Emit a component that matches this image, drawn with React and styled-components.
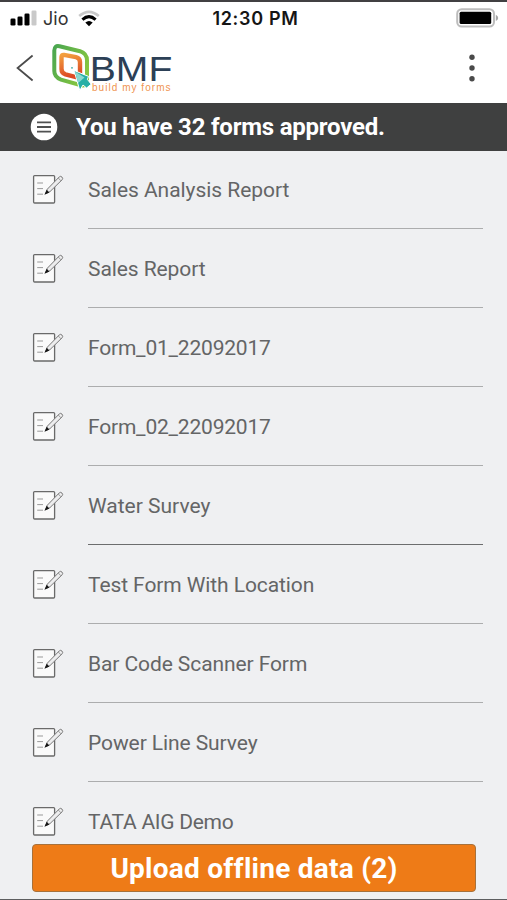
import React from 'react';
import styled, { createGlobalStyle } from 'styled-components';

const COLORS = {
  ink: '#3f4040',
  page: '#eff0f2',
  text: '#646566',
  line: '#acadae',
  orange: '#ee7b17',
  navy: '#2c4056',
};

const FORMS = [
  { name: 'Sales Analysis Report', spacing: '-0.04px' },
  { name: 'Sales Report' },
  { name: 'Form_01_22092017', spacing: '-0.2px' },
  { name: 'Form_02_22092017', spacing: '-0.2px' },
  { name: 'Water Survey', active: true, spacing: '0' },
  { name: 'Test Form With Location' },
  { name: 'Bar Code Scanner Form' },
  { name: 'Power Line Survey' },
  { name: 'TATA AIG Demo', spacing: '-0.27px' },
];

function SignalIcon() {
  return (
    <svg width="28" height="18" viewBox="0 0 28 18">
      <rect x="0.5" y="9.5" width="5" height="7" rx="1.3" />
      <rect x="7.5" y="7.5" width="5" height="9" rx="1.3" />
      <rect x="14.5" y="4.5" width="5" height="12" rx="1.3" />
      <rect x="21.5" y="1.5" width="5" height="15" rx="1.3" fill="#c9c9c9" />
    </svg>
  );
}

function WifiIcon() {
  return (
    <svg width="22" height="17" viewBox="0 0 22 17" fill="none">
      <path d="M1.2 6Q11 -2.4 20.8 6" stroke="#c9c9c9" strokeWidth="2.6" />
      <path d="M4.4 9.6Q11 3.6 17.6 9.6" stroke="#000" strokeWidth="3" />
      <path d="M7.3 12.6Q11 9.2 14.7 12.6L11 16.2Z" fill="#000" />
    </svg>
  );
}

function BatteryIcon() {
  return (
    <svg width="43" height="20" viewBox="0 0 43 20">
      <rect x="1.2" y="1.2" width="36.8" height="17.4" rx="4.5" fill="#fff" stroke="#bdbdbd" strokeWidth="2" />
      <rect x="3.6" y="3.8" width="31.6" height="12.2" rx="1.5" />
      <path d="M39.8 6.7Q42.2 8 42.2 10T39.8 13Z" fill="#a5a5a5" />
    </svg>
  );
}

function Logo() {
  return (
    <svg width="124" height="56" viewBox="50 40 124 56">
      <defs>
        <linearGradient id="leaf" x1="0" y1="0" x2="1" y2="0.6">
          <stop offset="0" stopColor="#4aa650" />
          <stop offset="1" stopColor="#86c640" />
        </linearGradient>
        <linearGradient id="flame" x1="0" y1="0" x2="0.2" y2="1">
          <stop offset="0" stopColor="#f3a03e" />
          <stop offset="1" stopColor="#dc4a25" />
        </linearGradient>
      </defs>
      <path
        d="M59.5 46.2L80 51.2Q87 53.5 87 60.5V82Q86 86.5 81 85.2L61 79.6Q54.3 77 54.3 71V50.5Q54.5 45 59.5 46.2Z"
        fill="#fff"
        stroke="url(#leaf)"
        strokeWidth="4"
      />
      <path
        d="M64 54.9L76 57.2Q80 58.2 80 62V75.5Q79.8 78 77 77.4L65.5 74.4Q61.5 73 61.5 69V57Q61.6 54.5 64 54.9Z"
        fill="#fff"
        stroke="url(#flame)"
        strokeWidth="4.4"
      />
      <circle cx="72" cy="67.8" r="0.9" fill="#3aa7a0" />
      <path d="M74 70.4L88.5 76.4L87.4 79.4L91.2 84.2L86.6 88L83 85L79.8 90.5Z" fill="#26afa5" stroke="#fff" strokeWidth="1" />
      <path d="M74.8 71.2L84.5 77.5L78.2 83Z" fill="#8ad8d0" />
      <LogoName x="89.8" y="80.6" textLength="82.5" lengthAdjust="spacingAndGlyphs">
        BMF
      </LogoName>
      <LogoTagline x="92" y="91.3" textLength="78.5" lengthAdjust="spacing">
        build my forms
      </LogoTagline>
    </svg>
  );
}

function FormIcon() {
  return (
    <svg width="32" height="31" viewBox="0 0 32 31" fill="none">
      <rect x="1.6" y="1.6" width="21" height="27.4" rx="1" fill="#fafafa" stroke="#6a6a6a" strokeWidth="1.3" />
      <path d="M5.2 9H11M5.2 14.6H11M5.2 20.2H11" stroke="#999" strokeWidth="1" />
      <path d="M13.5 19.8L15.3 15.2L27.4 2.8Q28.5 1.7 30 3.1Q31.3 4.5 30.2 5.7L18 17.6Z" fill="#ededee" stroke="#777" strokeWidth="1" />
      <path d="M26.3 4L28.9 6.8" stroke="#888" strokeWidth="0.8" />
      <path d="M12.4 20.8L14.7 15.8L17.4 18.5Z" fill="#161616" />
    </svg>
  );
}

function App() {
  return (
    <Screen>
      <GlobalStyle />
      <StatusBar>
        <Carrier>
          <SignalIcon />
          <span>Jio</span>
          <WifiIcon />
        </Carrier>
        <Clock>12:30 PM</Clock>
        <Battery>
          <BatteryIcon />
        </Battery>
      </StatusBar>

      <NavBar>
        <IconButton aria-label="Back">
          <svg width="18" height="28" viewBox="0 0 18 28" fill="none">
            <path d="M16.6 1.5L1.6 14L16.6 26.5" stroke="#4b4b4b" strokeWidth="1.8" />
          </svg>
        </IconButton>
        <Logo />
        <MenuButton aria-label="Menu">
          <svg width="6" height="28" viewBox="0 0 6 28" fill="#4a4a4a">
            <circle cx="3" cy="3.2" r="2.7" />
            <circle cx="3" cy="14" r="2.7" />
            <circle cx="3" cy="24.8" r="2.7" />
          </svg>
        </MenuButton>
      </NavBar>

      <Banner>
        <svg width="28" height="28" viewBox="0 0 28 28">
          <circle cx="14" cy="14" r="13.3" fill="#fff" />
          <path d="M7 9.3H21M7 14H21M7 18.7H21" stroke="#505151" strokeWidth="1.8" />
        </svg>
        <BannerText>You have 32 forms approved.</BannerText>
      </Banner>

      <FormList>
        {FORMS.map((form) => (
          <FormRow key={form.name}>
            <FormIcon />
            <FormName $active={form.active} $spacing={form.spacing}>
              {form.name}
            </FormName>
          </FormRow>
        ))}
      </FormList>

      <Footer>
        <UploadButton>Upload offline data (2)</UploadButton>
      </Footer>
    </Screen>
  );
}

export default App;

const GlobalStyle = createGlobalStyle`
  * {
    box-sizing: border-box;
  }

  body {
    margin: 0;
    background: ${COLORS.page};
    font-family: Roboto, 'Liberation Sans', sans-serif;
  }

  svg {
    display: block;
    flex-shrink: 0;
  }
`;

const Screen = styled.div`
  display: flex;
  flex-direction: column;
  width: 507px;
  height: 900px;
  overflow: hidden;
  border-top: 2px solid #414042;
  border-bottom: 1px solid #5d5e60;
  background: ${COLORS.page};
`;

const StatusBar = styled.div`
  display: grid;
  grid-template-columns: 1fr auto 1fr;
  align-items: center;
  height: 34px;
  padding: 0 8px 2px 10px;
  background: #fff;
  font-family: Inter, 'Liberation Sans', sans-serif;
`;

const Carrier = styled.div`
  display: flex;
  align-items: center;
  color: #333;
  font-size: 18px;

  span {
    margin: 0 10px 0 5px;
  }
`;

const Clock = styled.div`
  margin-left: 2px;
  color: #151515;
  font-size: 18px;
  font-weight: 600;
  letter-spacing: 0.7px;
`;

const Battery = styled.div`
  display: flex;
  justify-content: flex-end;
`;

const NavBar = styled.div`
  display: flex;
  align-items: center;
  height: 67px;
  padding: 0 32px 3px 16px;
  background: #fff;
`;

const IconButton = styled.button`
  display: flex;
  margin: 0 16px 0 0;
  padding: 0;
  border: 0;
  background: none;
`;

const MenuButton = styled(IconButton)`
  margin: 0 0 0 auto;
`;

const LogoName = styled.text`
  fill: ${COLORS.navy};
  font-family: 'Liberation Sans', sans-serif;
  font-size: 35px;
`;

const LogoTagline = styled.text`
  fill: #ef9450;
  font-family: 'Liberation Sans', sans-serif;
  font-size: 10px;
`;

const Banner = styled.div`
  display: flex;
  align-items: center;
  gap: 18px;
  height: 48px;
  padding-left: 30px;
  background: ${COLORS.ink};
`;

const BannerText = styled.h1`
  margin: 0;
  color: #fff;
  font-size: 24px;
  font-weight: 700;
  letter-spacing: -0.22px;
  white-space: nowrap;
`;

const FormList = styled.ul`
  flex: 1;
  min-height: 0;
  margin: 0;
  padding: 0;
  overflow: hidden;
  list-style: none;
`;

const FormRow = styled.li`
  display: flex;
  height: 79px;
  padding: 0 24px 0 32px;
  gap: 24px;

  svg {
    margin-top: 23px;
  }
`;

const FormName = styled.span`
  display: flex;
  flex: 1;
  align-items: center;
  height: 78px;
  padding-top: 1px;
  border-bottom: 1px solid ${(props) => (props.$active ? '#6c6d6e' : COLORS.line)};
  color: ${COLORS.text};
  font-size: 21px;
  letter-spacing: ${(props) => props.$spacing || '-0.09px'};
`;

const Footer = styled.div`
  display: flex;
  height: 55px;
  padding: 0 31px 7px 32px;
`;

const UploadButton = styled.button`
  flex: 1;
  padding: 0;
  border: 1px solid #a7713b;
  border-radius: 4px;
  background: ${COLORS.orange};
  color: #fff;
  font-family: inherit;
  font-size: 28px;
  font-weight: 700;
  letter-spacing: 0.25px;
`;
